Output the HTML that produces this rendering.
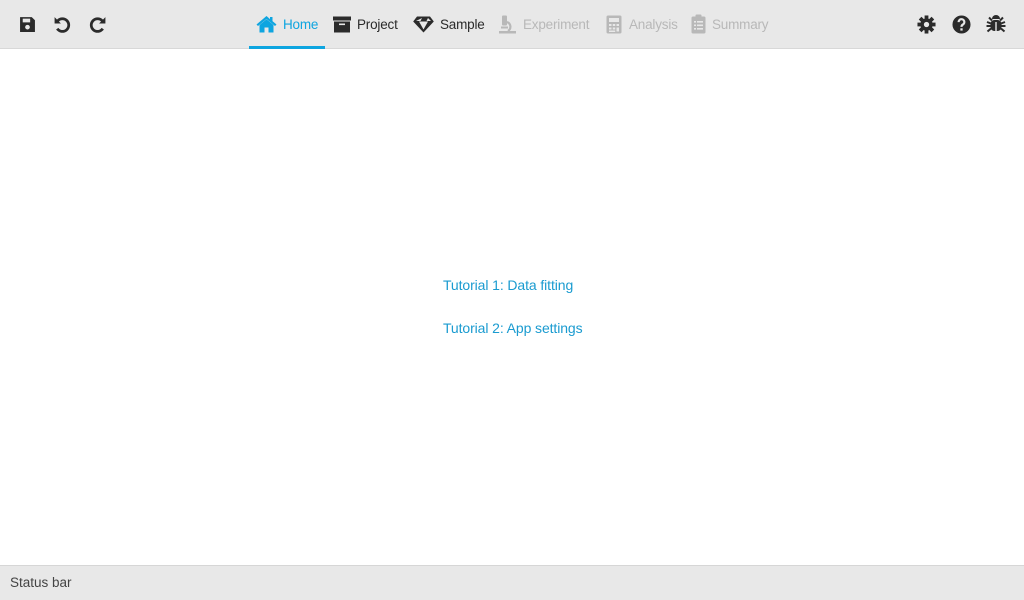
<!DOCTYPE html>
<html><head><meta charset="utf-8">
<style>
*{margin:0;padding:0;box-sizing:border-box}
body{width:1024px;height:600px;background:#fff;font-family:"Liberation Sans",sans-serif;position:relative;overflow:hidden}
.top{position:absolute;left:0;top:0;width:1024px;height:49px;background:#e8e8e8;border-bottom:1px solid #d8d8d8}
.t{position:absolute;top:16px;font-size:13.5px;line-height:17px;color:#2b2b2b;white-space:nowrap;letter-spacing:-0.2px}
.g{color:#b8b8b8}
.b{color:#0ea5e0}
svg{position:absolute}
.ul{position:absolute;left:249px;top:46px;width:76px;height:3px;background:#0ea5e0}
.status{position:absolute;left:0;top:565px;width:1024px;height:35px;background:#e8e8e8;border-top:1px solid #d6d6d6;font-size:13.5px;color:#444;padding:9px 10px 0}
.link{position:absolute;left:443px;font-size:14px;color:#1a9bd0;letter-spacing:-0.1px;white-space:nowrap}
</style></head><body>
<div class="top">
<svg style="left:19px;top:16px" width="17" height="17" viewBox="0 0 16 16"><path d="M1 1h11l3 3v11H1z" fill="#2b2b2b"/><rect x="3.5" y="2.5" width="7" height="3.5" fill="#e8e8e8"/><circle cx="8" cy="10.5" r="2.2" fill="#e8e8e8"/></svg>
<svg style="left:53px;top:15px" width="19" height="19" viewBox="0 0 18 18"><path d="M4.5 5.5A6 6 0 1 1 4 13" fill="none" stroke="#2b2b2b" stroke-width="2.6"/><path d="M1.5 2v6h6z" fill="#2b2b2b"/></svg>
<svg style="left:88px;top:15px" width="19" height="19" viewBox="0 0 18 18"><path d="M13.5 5.5A6 6 0 1 0 14 13" fill="none" stroke="#2b2b2b" stroke-width="2.6"/><path d="M16.5 2v6h-6z" fill="#2b2b2b"/></svg>
<svg style="left:256px;top:15px" width="21" height="18" viewBox="0 0 21 18"><path d="M10.5 1L0.5 9.5l1.5 1.5 8.5-7 8.5 7 1.5-1.5-4-3.4V2h-2.5v2.1z" fill="#0ea5e0"/><path d="M3.5 10l7-5.8 7 5.8v7.5h-5v-5h-4v5h-5z" fill="#0ea5e0"/></svg>
<span class="t b" style="left:283px">Home</span>
<div class="ul"></div>
<svg style="left:333px;top:16px" width="18" height="17" viewBox="0 0 18 17"><rect x="0" y="0.5" width="18" height="4" fill="#2b2b2b"/><rect x="1" y="5.5" width="16" height="11" fill="#2b2b2b"/><rect x="6" y="7.5" width="6" height="1.6" fill="#e8e8e8"/></svg>
<span class="t" style="left:357px">Project</span>
<svg style="left:413px;top:16px" width="21" height="17" viewBox="0 0 21 17"><path d="M4 0.5h13l3.8 5L10.5 16.5 0.2 5.5z" fill="#2b2b2b"/><path d="M6 5.5l4.5 8 4.5-8zM3 5h4.5l1.5-3zM13.5 5H18l-3-3z" fill="#e8e8e8"/></svg>
<span class="t" style="left:440px">Sample</span>
<svg style="left:498px;top:15px" width="19" height="19" viewBox="0 0 19 19"><rect x="4" y="0.5" width="5" height="10" rx="1" fill="#b8b8b8"/><path d="M9 7a5 5 0 0 1 1 9" fill="none" stroke="#b8b8b8" stroke-width="2.2"/><rect x="1" y="16" width="17" height="2.5" fill="#b8b8b8"/><rect x="3" y="11.5" width="7" height="2" fill="#b8b8b8"/></svg>
<span class="t g" style="left:523px">Experiment</span>
<svg style="left:606px;top:15px" width="16" height="19" viewBox="0 0 16 19"><rect x="0.5" y="0.5" width="15" height="18" rx="1.5" fill="#b8b8b8"/><rect x="3" y="3" width="10" height="4" fill="#e8e8e8"/><g fill="#e8e8e8"><rect x="3" y="9" width="2.5" height="2"/><rect x="6.75" y="9" width="2.5" height="2"/><rect x="10.5" y="9" width="2.5" height="2"/><rect x="3" y="12.5" width="2.5" height="2"/><rect x="6.75" y="12.5" width="2.5" height="2"/><rect x="10.5" y="12.5" width="2.5" height="4"/><rect x="3" y="15.5" width="6.25" height="1.5"/></g></svg>
<span class="t g" style="left:629px">Analysis</span>
<svg style="left:691px;top:14px" width="15" height="20" viewBox="0 0 15 20"><rect x="0.5" y="2.5" width="14" height="17" rx="1.5" fill="#b8b8b8"/><rect x="4.5" y="0.5" width="6" height="3.5" rx="1" fill="#b8b8b8"/><g fill="#e8e8e8"><rect x="3" y="7" width="2" height="1.6"/><rect x="6" y="7" width="6" height="1.6"/><rect x="3" y="10.5" width="2" height="1.6"/><rect x="6" y="10.5" width="6" height="1.6"/><rect x="3" y="14" width="2" height="1.6"/><rect x="6" y="14" width="6" height="1.6"/></g></svg>
<span class="t g" style="left:712px">Summary</span>
<svg style="left:917px;top:15px" width="19" height="19" viewBox="0 0 20 20"><g fill="#2b2b2b" transform="translate(10 10)"><circle r="6.5"/><rect x="-2" y="-9.5" width="4" height="19"/><rect x="-2" y="-9.5" width="4" height="19" transform="rotate(45)"/><rect x="-2" y="-9.5" width="4" height="19" transform="rotate(90)"/><rect x="-2" y="-9.5" width="4" height="19" transform="rotate(135)"/></g><circle cx="10" cy="10" r="2.8" fill="#e8e8e8"/></svg>
<svg style="left:952px;top:15px" width="19" height="19" viewBox="0 0 20 20"><circle cx="10" cy="10" r="9.5" fill="#2b2b2b"/><path d="M7 7.5a3 3 0 1 1 4.5 2.5c-1.2.7-1.5 1.2-1.5 2.5" fill="none" stroke="#e8e8e8" stroke-width="2.3"/><rect x="8.8" y="14" width="2.4" height="2.4" fill="#e8e8e8"/></svg>
<svg style="left:986px;top:14px" width="20" height="20" viewBox="0 0 20 20"><g fill="#2b2b2b"><path d="M6 5a4 4 0 0 1 8 0z"/><rect x="4.5" y="6" width="11" height="11" rx="4"/><g stroke="#2b2b2b" stroke-width="2"><path d="M1 8l4 1.5M19 8l-4 1.5M0.5 12h4M19.5 12h-4M1.5 17.5l3.5-3M18.5 17.5l-3.5-3M3 3.5l3 3M17 3.5l-3 3"/></g></g><rect x="9.3" y="8" width="1.4" height="9" fill="#e8e8e8"/></svg>
</div>
<div class="link" style="top:277px">Tutorial 1: Data fitting</div>
<div class="link" style="top:320px">Tutorial 2: App settings</div>
<div class="status">Status bar</div>
</body></html>
